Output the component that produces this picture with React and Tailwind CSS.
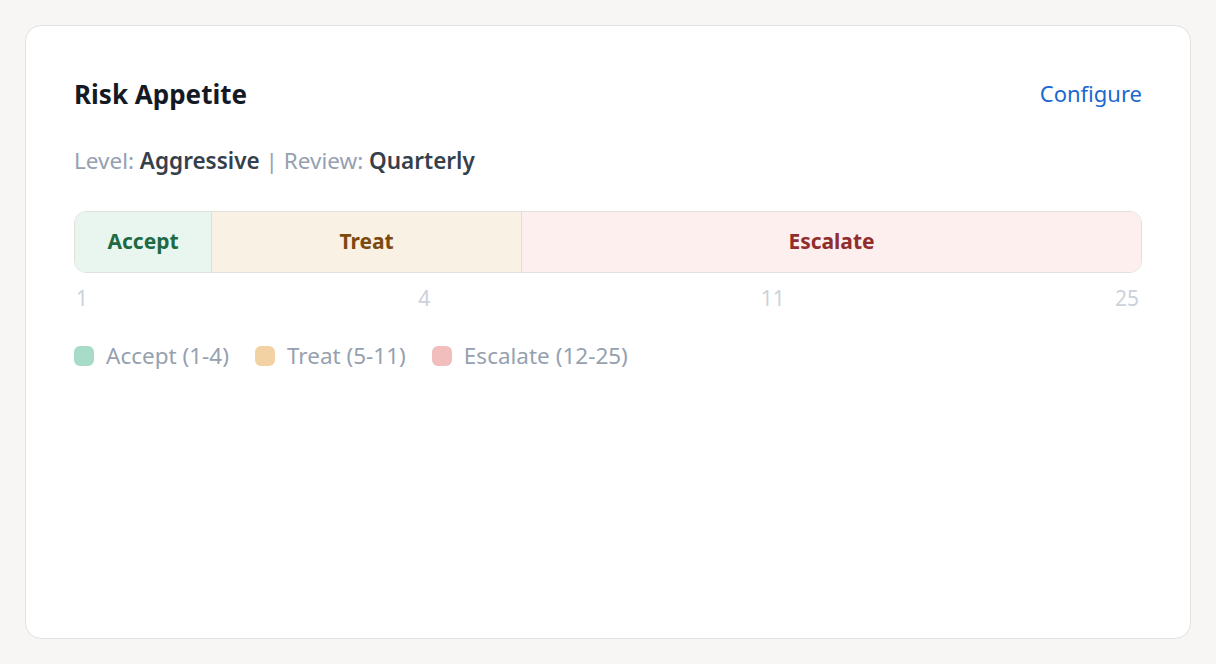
import React from 'react';

const segments = [
  { label: 'Accept', width: '12.76%', cls: 'bg-[#e9f5ef] text-[#1d6a43]' },
  { label: 'Treat', width: '29.08%', cls: 'bg-[#f9f1e4] text-[#7c4a0f] border-l border-[#e3ded7]' },
  { label: 'Escalate', width: '58.16%', cls: 'bg-[#fcefee] text-[#922d2d] border-l border-[#e3ded7]' },
];

const legend = [
  { label: 'Accept (1-4)', dot: 'bg-[#a9dcc8]' },
  { label: 'Treat (5-11)', dot: 'bg-[#f2d1a2]' },
  { label: 'Escalate (12-25)', dot: 'bg-[#f1bdbd]' },
];

const App = () => {
  return (
    <div className="min-h-[664px] bg-[#f7f6f4] p-[25px] font-['Noto_Sans',sans-serif]">
      <div className="h-[614px] w-[1166px] rounded-[16px] border border-[#e4e2df] bg-white px-[48px] pt-[48px]">
        <div className="flex h-[40px] items-center justify-between">
          <h2 className="text-[26px] font-bold text-[#141a24]">Risk Appetite</h2>
          <a className="-mt-[2px] text-[22px] text-[#1b68d1]">Configure</a>
        </div>
        <p className="mt-[33px] h-[28px] text-[22.5px] leading-[28px] text-[#95a1b0]">
          Level: <span className="font-semibold text-[#363f4c]">Aggressive</span> | Review:{' '}
          <span className="font-semibold text-[#363f4c]">Quarterly</span>
        </p>
        <div className="mt-[36px] flex h-[62px] overflow-hidden rounded-[12px] border border-[#e3e0dc]">
          {segments.map((s) => (
            <div
              key={s.label}
              className={`flex items-center justify-center text-[21px] font-bold ${s.cls}`}
              style={{ width: s.width }}
            >
              {s.label}
            </div>
          ))}
        </div>
        <div className="mt-[12px] flex justify-between pl-[2px] pr-[3px] text-[21px] leading-[26px] text-[#ccd2da]">
          <span>1</span>
          <span>4</span>
          <span>11</span>
          <span>25</span>
        </div>
        <div className="mt-[32px] flex items-center gap-[26px]">
          {legend.map((l) => (
            <div key={l.label} className="flex items-center gap-[12px]">
              <span className={`h-[20px] w-[20px] rounded-[6px] ${l.dot}`} />
              <span className="text-[22.5px] leading-[26px] text-[#96a1b0]">{l.label}</span>
            </div>
          ))}
        </div>
      </div>
    </div>
  );
};

export default App;
